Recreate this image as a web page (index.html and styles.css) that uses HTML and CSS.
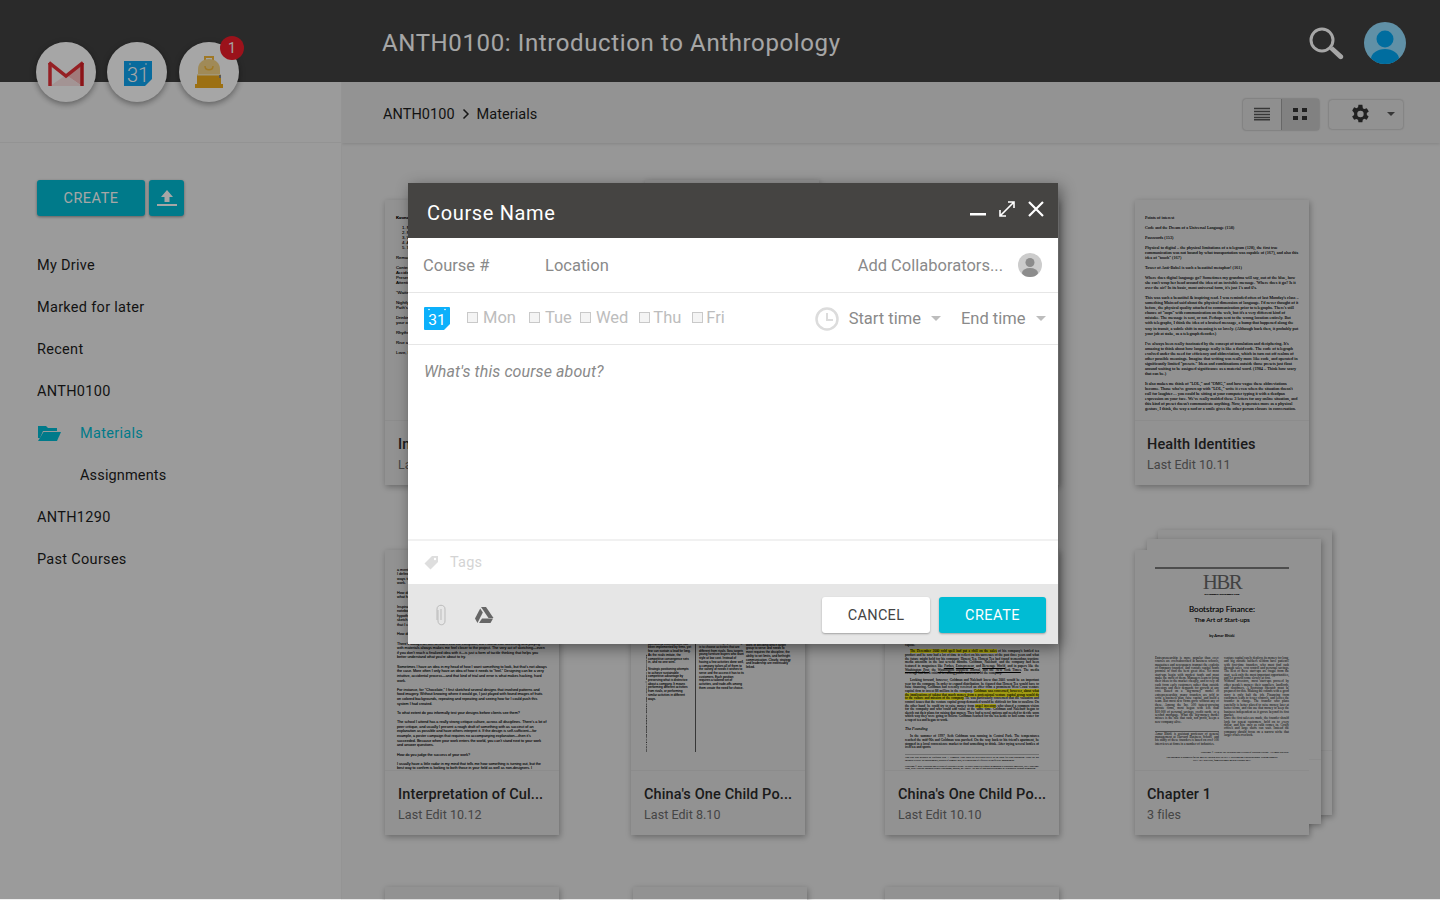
FILE: index.html
```html
<!DOCTYPE html>
<html lang="en">
<head>
<meta charset="utf-8">
<title>ANTH0100: Introduction to Anthropology</title>
<link rel="stylesheet" href="styles.css">
</head>
<body>
<div class="app">
  <header class="topbar">
    <h1 class="course-title">ANTH0100: Introduction to Anthropology</h1>
    <div class="top-actions">
      <svg class="search-icon" width="36" height="40" viewBox="0 0 36 40"><circle cx="14" cy="16" r="11" fill="none" stroke="#fff" stroke-width="3"/><path d="M21.500 25.500l3.500-3 9.500 8.500c1 1 1 2.500 0 3.500s-2.500 1-3.500 0z" fill="#fff"/></svg>
      <svg class="avatar" width="42" height="42" viewBox="0 0 42 42"><defs><clipPath id="av"><circle cx="21" cy="21" r="21"/></clipPath></defs><circle cx="21" cy="21" r="21" fill="#94deff"/><g clip-path="url(#av)" fill="#00a8f4"><circle cx="21" cy="17" r="8.500"/><ellipse cx="21" cy="37" rx="14" ry="10"/></g></svg>
    </div>
  </header>

  <div class="body-row">
    <aside class="sidebar">
      <div class="side-top"></div>
      <div class="side-actions">
        <button class="btn-create-side">CREATE</button>
        <button class="btn-upload"><svg width="20" height="18" viewBox="0 0 20 18"><path d="M10 1l6 7h-3.500v5h-5v-5H4z" fill="#fff"/><rect y="15" width="20" height="2" fill="#fff"/></svg></button>
      </div>
      <nav class="side-nav">
        <a class="nav-item">My Drive</a>
        <a class="nav-item">Marked for later</a>
        <a class="nav-item">Recent</a>
        <a class="nav-item">ANTH0100</a>
        <a class="nav-item nav-active"><svg class="folder" width="24" height="16" viewBox="0 0 24 16"><path d="M1 1h8l2 2h9v3H6L3 13 1 13z" fill="#00bcd4"/><path d="M6.500 7H24l-4 9H1z" fill="#00bcd4"/></svg><span class="nav-label">Materials</span></a>
        <a class="nav-item nav-sub">Assignments</a>
        <a class="nav-item">ANTH1290</a>
        <a class="nav-item">Past Courses</a>
      </nav>
    </aside>

    <main class="main">
      <div class="crumbs">
        <div class="crumb-path">
          <span>ANTH0100</span>
          <svg width="8" height="12" viewBox="0 0 8 12"><path d="M1.500 1.500L6 6l-4.500 4.500" fill="none" stroke="#222" stroke-width="1.500"/></svg>
          <span>Materials</span>
        </div>
        <div class="view-toggle">
          <span class="tog"><svg width="18" height="14" viewBox="0 0 18 14"><path d="M1 1.500h16M1 4.500h16M1 7.500h16M1 10.500h16M1 12.800h16" stroke="#555" stroke-width="1.500"/></svg></span>
          <span class="tog tog-on"><svg width="16" height="12" viewBox="0 0 16 12"><path d="M1 0h5v4H1zM10 0h5v4h-5zM1 8h5v4H1zM10 8h5v4h-5z" fill="#333"/></svg></span>
        </div>
        <div class="settings">
          <svg class="gear" width="22" height="22" viewBox="0 0 24 24"><path fill="#333" d="M19.400 13a7.600 7.600 0 0 0 0-2l2.200-1.700-2.200-3.700-2.600 1a7.500 7.500 0 0 0-1.700-1L14.600 2h-4.300l-.4 2.700a7.500 7.500 0 0 0-1.700 1l-2.600-1-2.100 3.600L5.600 11a7.600 7.600 0 0 0 0 2l-2.200 1.700 2.200 3.700 2.600-1a7.500 7.500 0 0 0 1.700 1l.4 2.600h4.300l.4-2.700a7.500 7.500 0 0 0 1.700-1l2.600 1 2.100-3.600zM12.500 15.500a3.500 3.500 0 1 1 0-7 3.500 3.500 0 0 1 0 7z"/></svg>
          <span class="caret caret-dark"></span>
        </div>
      </div>

      <div class="grid">
        <article class="card">
          <div class="thumb thumb-bold">
            <p><b>Kovno ghetto notes</b></p>
            <p class="num">1. Memory<br>2. Record<br>3. Witness<br>4. Archive<br>5. Silence</p>
            <p>Remarks on the reading</p>
            <p>Context of the diary<br>Accidental preservation<br>Presence of the author<br>Attention to ritual</p>
            <p>"Waiting" as a practice</p>
            <p>Nightly gatherings<br>Path's end in the camps</p>
            <p>Drinking tea together in<br>your own home</p>
            <p>Rhythm of daily life</p>
            <p>Rise and fall</p>
            <p>Love, loss</p>
          </div>
          <div class="meta"><h3>Inscriptions of Ev...</h3><small>Last Edit 10.14</small></div>
        </article>

        <article class="card stack">
          <div class="back back-2 back-top"></div>
          <div class="thumb"></div>
          <div class="meta"><h3>Course Reader</h3><small>2 files</small></div>
        </article>

        <article class="card">
          <div class="thumb"></div>
          <div class="meta"><h3>Fieldwork Notes</h3><small>Last Edit 10.13</small></div>
        </article>

        <article class="card">
          <div class="thumb thumb-serif">
            <p>Points of interest</p>
            <p>Code and the Dream of a Universal Language (158)</p>
            <p>Passwords (153)</p>
            <p>Physical to digital – the physical limitations of a telegram (128), the first true communication was not bound by what transportation was capable of (167), and also this idea of "touch" (167)</p>
            <p>Tower of Anti-Babel is such a beautiful metaphor! (161)</p>
            <p>Where does digital language go? Sometimes my grandma will say, out of the blue, how she can't wrap her head around the idea of an invisible message. 'Where does it go? Is it over the air? In its basic, most universal form, it's just 1's and 0's.</p>
            <p>This was such a beautiful &amp; inspiring read. I was reminded often of last Monday's class – something Mairead said about the physical dimension of language. I'd never thought of it before, the physical quality attached to communication prior to telegraphs. There's still chance of "oops" with communication on the web, but it's a very different kind of mistake. The message is sent, or not. Perhaps sent to the wrong location entirely. But with telegraphs, I think the idea of a bruised message, a bump that happened along the way in transit, a subtle shift in meaning is so lovely. (Although back then, it probably put your job at stake, as a telegraph decoder.)</p>
            <p>I've always been really fascinated by the concept of translation and deciphering. It's amazing to think about how language really is like a fluid code. The code of telegraph evolved under the need for efficiency and abbreviation, which in turn cut off realms of other possible meanings. Imagine that writing was really more like code, and operated in significantly limited "presets." Ideas and combinations outside those presets just float around waiting to be assigned significance as a material word. (1984 – Think how scary that can be.)</p>
            <p>It also makes me think of "LOL," and "OMG," and how vague these abbreviations become. Those who've grown up with "LOL," write it even when the situation doesn't call for laughter… you could be sitting at your computer typing it with a deadpan expression on your face. We've really molded these 3 letters for any online situation, and this kind of preset doesn't communicate anything. Now, it operates more as a physical gesture, I think, the way a nod or a smile gives the other person closure in conversation.</p>
          </div>
          <div class="meta"><h3>Health Identities</h3><small>Last Edit 10.11</small></div>
        </article>

        <article class="card">
          <div class="thumb thumb-sans">
            <p>a mentor once told me that a practice is built<br>I define my process as one of making. There are<br>ways to begin a project, and each leads to new<br>work.</p>
            <p>How do you begin a new project or commission, and<br>what happens in those first few days of the work?</p>
            <p>Inspiration comes from everywhere, and I keep<br>notebooks, pinned images and scraps of paper that<br>hypothesize where the research will go next. The<br>sketch-and-model stage is the part of the process<br>that I can't do without and it often surprises me.</p>
            <p>How do you move from an idea to an image?</p>
            <p>There's always an itch to reach into the computer, but I found that sketching and playing with materials always makes me feel closer to the project. The very act of sketching—even if you don't reach a finalized idea with it—is just a form of tactile thinking that helps you better understand what you're about to try.</p>
            <p>Sometimes I have an idea in my head of how I want something to look, but that's not always the case. More often I only have an idea of how it needs to "feel." Designing can be a very intuitive, accidental process—and that kind of trial and error is what makes hacking, hard work.</p>
            <p>For instance, for "Chocolate," I first sketched several designs that involved patterns and food imagery. Without knowing where it would go, I just played with found images of fruits on colored backgrounds, repeating and repeating and seeing how far I could push this system I had created.</p>
            <p>To what extent do you informally test your designs before clients see them?</p>
            <p>The school I attend has a really strong critique culture, across all disciplines. There's a lot of peer critique, and usually I present a rough draft of something with as succinct of an explanation as possible and have others interpret it. If the design is self-sufficient—for example, a poster campaign that requires no accompanying explanation—then it's succeeded. Because when your work enters the world, you can't stand next to your work and answer questions.</p>
            <p>How do you judge the success of your work?</p>
            <p>I usually have a little radar in my mind that tells me how something is turning out, but the best way to confirm is looking to both those in your field as well as non-designers. I</p>
          </div>
          <div class="meta"><h3>Interpretation of Cul...</h3><small>Last Edit 10.12</small></div>
        </article>

        <article class="card">
          <div class="thumb thumb-cols">
            <span class="side-text">Harvard Business Review November–December 1996 — Copyright © 1996 by Harvard College</span>
            <div class="col col-a">
              <p>Operational effectiveness is necessary but not sufficient, and competition on it alone leads to diminishing returns for the productivity frontier, which describes the maximum value a company can create at a given cost, given the best available technology, skills, and management techniques. Continuous improvement in operational effectiveness has been implemented by firms, yet few can sustain a lead for long. As the rivals imitate, the competitive convergence sets in, and no one wins.</p>
              <p>Strategic positioning attempts to achieve sustainable competitive advantage by preserving what is distinctive about a company. It means performing different activities from rivals, or performing similar activities in different ways.</p>
            </div>
            <div class="col col-b">
              <p>to sustain rivalry from the Internet and to be more alert with information and better cost.</p>
              <p>A. Strategy rests on unique activities. Competitive strategy is about being different. It means deliberately choosing a different set of activities to deliver a unique mix of value. The essence of strategic positioning is to choose activities that are different from rivals. Ikea targets young furniture buyers who want style at low cost. Instead of having a few activities done well, a company tailors all of them to the variety of needs it wishes to serve and the access it has to its customers. Each position requires a tailored set of activities, and trade-offs among them create the need for choice.</p>
            </div>
            <div class="col col-c">
              <p>the whole chain of value, and in the industry the whole marketing approach, the entire value chain, and their disciplines.</p>
              <p>Employees need guidance about how to deepen a strategic position rather than broaden or compromise it. About how to extend the company's uniqueness while strengthening the fit among its activities. This work of deciding which target group to serve and needs to meet requires the discipline, the ability to set limits, and forthright communication. Clearly, strategy and leadership are inextricably linked.</p>
            </div>
          </div>
          <div class="meta"><h3>China's One Child Po...</h3><small>Last Edit 8.10</small></div>
        </article>

        <article class="card">
          <div class="thumb thumb-case">
            <p class="in">Several dividends were offered to invest in the company if Goldman was willing to raise new capital.</p>
            <p class="in"><mark>The December 2000 cold spell had put a chill on the sales</mark> of his company's bottled tea product and he now had a lot of time to reflect on his successes of the past three years and what the future might hold for his company, Honest Tea. Honest Tea had found tremendous traction: media attention in the last several months. Goldman, Nalebuff, and the company had been featured in magazines like <u>Forbes</u>, <u>Entrepreneur</u>, and <u>Beverage World</u>, and in papers like the <u>Washington Post</u>, the <u>Washington Business Journal</u>, and the <u>New York Times</u>. The media coverage had been critical in raising public awareness of the company.</p>
            <p class="in">Looking forward, however, Goldman and Nalebuff knew that 2001 would be an important year for the company. In order to expand distribution, he figured that Honest Tea would have to raise financing. Goldman had recently received an offer from a prominent West Coast venture capital firm to invest $8 million in the company. <mark>Goldman was concerned, however, about what the implications of taking that much money from a professional venture capital group would do to the culture and mission of the company.</mark> He was particularly concerned that the valuation and control issues that the venture capital group demanded would be difficult for him to swallow. On the other hand, he could try to raise money from <mark>angel investors</mark> who shared a common vision for the company and who could add value at the same time. Goldman and Nalebuff began to sketch out their plans for raising that money. They had several options and needed to decide soon which way they were going to follow. Goldman reached for the tea kettle to boil some water for a cup of tea and began to work.</p>
            <p class="founding"><i>The Founding</i></p>
            <p class="in">In the summer of 1997, Seth Goldman was running in Central Park. The temperatures reached the mid-90s and Goldman was parched. On the way back to his friend's apartment, he stopped in a local convenience market to find something to drink. After trying several bottles of iced tea and sports</p>
            <p class="foot">This case was prepared by Professor Paul A. Gompers. HBS cases are developed solely as the basis for class discussion. Cases are not intended to serve as endorsements, sources of primary data, or illustrations of effective or ineffective management.</p>
            <p class="foot2">Copyright © 2001 President and Fellows of Harvard College. To order copies or request permission to reproduce materials, call 1-800-545-7685, write Harvard Business School Publishing, Boston, MA 02163. No part of this publication may be reproduced without permission.</p>
          </div>
          <div class="meta"><h3>China's One Child Po...</h3><small>Last Edit 10.10</small></div>
        </article>

        <article class="card stack">
          <div class="back back-2"></div>
          <div class="back back-1"></div>
          <div class="thumb thumb-hbr">
            <div class="hbr-rule"></div>
            <div class="hbr-logo">HBR</div>
            <div class="hbr-issue">NOVEMBER–DECEMBER 1992</div>
            <div class="hbr-title">Bootstrap Finance:</div>
            <div class="hbr-sub">The Art of Start-ups</div>
            <div class="hbr-by">by Amar Bhidé</div>
            <div class="hbr-cols">
              <div class="hbr-left">
                <p class="hbr-body">Entrepreneurship is more popular than ever: courses are oversubscribed at business schools, magazines and newspapers trumpet the exploits of company founders, and venture capital funds promise to find the next great idea. Yet most start-ups begin with modest funds and must make the most of them. Managers learn to bring their ideas to the market cheaply, and to rely on cash from early customers rather than outside investors and their demands for growth at any cost. Based on a "big-money" model of entrepreneurship, many founders are told to write a business plan, raise capital, and build a team. But most new firms grow without any of these. Among the Inc. 500 fastest-growing private firms, most began with less than $10,000 of personal savings, credit cards, or a second mortgage. What the big-money model misses is the rule that cash, not profit, keeps a new company alive.</p>
                <p class="rule-top">Amar Bhidé is assistant professor of general management at Harvard Business School, and his study of these founders is based on over 100 interviews at firms in a number of industries.</p>
              </div>
              <div>
                <p>venture capital rarely deploys its money for long, and big outside backers seldom have patience with first-time founders, who must find cash through sales, cost control and personal savings. The best of these start-ups are frugal from the start, seek only the most important opportunities, and let growth come slowly at first.</p>
                <p>Without investors, most start-ups proceed by other people's money: their suppliers, landlords, and customers. A bootstrap operator must be prepared for this. Making the rounds with a good story is only half the job. Financing from customers leads to fewer controls, and leaves the founder in charge. The founder who plans carefully is better placed to raise money later at better terms, and can use that money to keep the business independent as it grows beyond its first market.</p>
                <p>Once the first sales are made, the founder should look for repeat customers, hold on to every dollar, and hire only as cash comes in. Costly offices and large staffs can wait. Instead the company should focus on a narrow niche that larger rivals overlook.</p>
              </div>
            </div>
            <div class="hbr-copy">Copyright © 1992 by the President and Fellows of Harvard College. All rights reserved.</div>
            <div class="hbr-note">This document is authorized for use only by Lorenzo Ricci in INFL 1 in Design and Entrepreneurship. Printing taught by<br>HILLARY ROUNDS, from September 2012 to February 2013.</div>
          </div>
          <div class="meta"><h3>Chapter 1</h3><small>3 files</small></div>
        </article>

        <article class="card"></article>
        <article class="card card-shift"></article>
        <article class="card"></article>
      </div>
    </main>
  </div>

  <div class="apps">
    <div class="app-circle">
      <svg class="ic-gmail" width="36" height="26" viewBox="0 0 36 26"><path d="M18 14L34 2v23z" fill="#f7bcbc"/><path d="M2 25l16-11 16 11z" fill="#fbe3e3"/><path d="M2 25V2" stroke="#e53238" stroke-width="3.500"/><path d="M1 1.500L18 15 35 1.500" fill="none" stroke="#e53238" stroke-width="3.500"/><path d="M34 25V2" stroke="#d81f26" stroke-width="3.500"/></svg>
    </div>
    <div class="app-circle">
      <svg class="ic-cal" width="30" height="27" viewBox="0 0 30 27"><path d="M1 1h28v18l-7 7H1z" fill="#0ea5f2"/><circle cx="7" cy="4" r=".8" fill="#fff"/><circle cx="23" cy="4" r=".8" fill="#fff"/><text x="15" y="21.500" text-anchor="middle" class="cal-num">31</text></svg>
    </div>
    <div class="app-circle app-bag">
      <svg class="ic-bag" width="28" height="33" viewBox="0 0 28 33"><path d="M9 5V1h10v4h-2V3h-6v2z" fill="#f5b93a"/><path d="M3 20V14C3 8 8 4 14 4s11 4 11 10v6z" fill="#f6d586"/><path d="M10 11c0 5 8 5 8 0" fill="none" stroke="#f5b93a" stroke-width="1.500"/><rect x="2" y="20" width="24" height="12" fill="#f0ac1e"/><rect x="2" y="19" width="24" height="1.500" fill="#f9e7b6"/><rect x="0" y="29" width="28" height="4" fill="#f0ac1e"/><rect x="24" y="20" width="2" height="3" fill="#888"/></svg>
      <span class="badge">1</span>
    </div>
  </div>

  <div class="scrim"></div>

  <section class="modal">
    <div class="modal-head">
      <h2>Course Name</h2>
      <div class="win-icons">
        <svg width="18" height="18" viewBox="0 0 18 18"><rect x="1" y="13" width="16" height="2.500" fill="#fff"/></svg>
        <svg width="18" height="18" viewBox="0 0 18 18"><path d="M2 16L16 2M10 2h6v6M2 10v6h6" fill="none" stroke="#fff" stroke-width="1.600"/></svg>
        <svg width="18" height="18" viewBox="0 0 18 18"><path d="M2 2l14 14M16 2L2 16" stroke="#fff" stroke-width="2.200"/></svg>
      </div>
    </div>
    <div class="row row-fields">
      <span class="f-num">Course #</span>
      <span class="f-loc">Location</span>
      <span class="f-collab">Add Collaborators...</span>
      <svg width="24" height="24" viewBox="0 0 24 24"><defs><clipPath id="cl"><circle cx="12" cy="12" r="12"/></clipPath></defs><circle cx="12" cy="12" r="12" fill="#ccc"/><g clip-path="url(#cl)" fill="#8c8c8c"><circle cx="12" cy="9.500" r="4.500"/><ellipse cx="12" cy="20" rx="8" ry="5"/></g></svg>
    </div>
    <div class="row row-when">
      <svg class="cal-small" width="26" height="24" viewBox="0 0 26 24"><path d="M0 2a1 1 0 0 1 1-1h24a1 1 0 0 1 1 1v16l-6 6H1a1 1 0 0 1-1-1z" fill="#0cb0fb"/><circle cx="5" cy="3.500" r=".8" fill="#fff"/><circle cx="21" cy="3.500" r=".8" fill="#fff"/><text x="13" y="18.500" text-anchor="middle" class="cal-num-s">31</text></svg>
      <label class="day d-mon"><i class="box"></i>Mon</label>
      <label class="day d-tue"><i class="box"></i>Tue</label>
      <label class="day d-wed"><i class="box"></i>Wed</label>
      <label class="day d-thu"><i class="box"></i>Thu</label>
      <label class="day d-fri"><i class="box"></i>Fri</label>
      <div class="time">
        <svg width="24" height="24" viewBox="0 0 24 24"><circle cx="12" cy="12" r="10.500" fill="none" stroke="#dcdcdc" stroke-width="2.500"/><path d="M12 6v7h6" fill="none" stroke="#dcdcdc" stroke-width="2"/></svg>
        <span class="t-start">Start time</span><span class="caret"></span>
        <span class="t-end">End time</span><span class="caret"></span>
      </div>
    </div>
    <div class="about">What's this course about?</div>
    <div class="tags">
      <svg width="15" height="15" viewBox="0 0 15 15"><path d="M8 1h6v6l-7.500 7.500L.5 8.500z" fill="#dedede"/><circle cx="11" cy="4" r="1.200" fill="#fff"/></svg>
      <span>Tags</span>
    </div>
    <div class="modal-foot">
      <svg class="clip" width="12" height="22" viewBox="0 0 12 22"><path d="M3 6v11c0 5 7 5 7 0V5C10 0 2 0 2 5v11" fill="none" stroke="#bbb" stroke-width="1"/><path d="M6 5v11" stroke="#bbb" stroke-width="1"/></svg>
      <svg class="drive" width="20" height="18" viewBox="0 0 20 18"><path d="M7 1h5l7.500 11h-5z" fill="#666"/><path d="M6.200 2.500l2.600 4L3.500 17 1 12.500z" fill="#666"/><path d="M8 12.500h11L16.500 17H5z" fill="#666"/></svg>
      <button class="btn-cancel">CANCEL</button>
      <button class="btn-create">CREATE</button>
    </div>
  </section>
</div>
</body>
</html>
```

FILE: styles.css
```css
* { box-sizing: border-box; }
html, body { margin: 0; height: 100%; overflow: hidden; }
body { font-family: Roboto, "Noto Sans", sans-serif; background: #e4e4e4; color: #222; }
p, h1, h2, h3 { margin: 0; font-weight: 400; }
button { font-family: inherit; border: 0; padding: 0; cursor: pointer; }

.app { height: 900px; position: relative; overflow: hidden; display: flex; flex-direction: column; }

/* top bar */
.topbar { height: 82px; flex: none; background: #414141; display: flex; align-items: center; padding: 4px 34px 0 382px; }
.course-title { font-size: 24px; letter-spacing: .62px; color: #fff; flex: 1; white-space: nowrap; }
.top-actions { display: flex; align-items: center; gap: 20px; }
.search-icon { display: block; margin-top: 2px; }
.avatar { display: block; }

/* floating app icons */
.apps { position: absolute; left: 36px; top: 42px; display: flex; gap: 11px; }
.app-circle { width: 60px; height: 60px; border-radius: 50%; background: #fff; box-shadow: 0 2px 6px rgba(0,0,0,.4); display: flex; align-items: center; justify-content: center; position: relative; }
.app-bag { margin-left: 1px; }
.ic-gmail { margin-top: 3px; }
.ic-cal { margin: 2px 0 0 2px; }
.ic-bag { margin-top: -2px; }
.badge { position: absolute; left: 41px; top: -6px; width: 24px; height: 24px; border-radius: 50%; background: #ee1c2a; color: #fff; font-size: 14px; display: flex; align-items: center; justify-content: center; }
.cal-num { font-family: Roboto, sans-serif; font-weight: 300; font-size: 20px; fill: #fff; }
.cal-num-s { font-family: Roboto, sans-serif; font-size: 15.500px; fill: #fff; }

.body-row { flex: 1; display: flex; min-height: 0; }

/* sidebar */
.sidebar { width: 342px; flex: none; background: #efefef; border-right: 1px solid #e4e4e4; }
.side-top { height: 61px; border-bottom: 1px solid #e2e2e2; }
.side-actions { display: flex; gap: 4px; padding: 37px 0 0 37px; }
.btn-create-side { width: 108px; height: 36px; border-radius: 3px; background: #00bcd4; color: #fff; font-size: 14.500px; letter-spacing: .5px; box-shadow: 0 1px 3px rgba(0,0,0,.4); }
.btn-upload { width: 35px; height: 36px; border-radius: 3px; background: #00bcd4; box-shadow: 0 1px 3px rgba(0,0,0,.4); display: flex; align-items: center; justify-content: center; }
.side-nav { padding: 28px 0 0 37px; display: flex; flex-direction: column; }
.nav-item { height: 42px; display: flex; align-items: center; font-size: 14.500px; letter-spacing: .3px; color: #1d1d1d; }
.nav-active { color: #00bcd4; }
.folder { margin-right: 19px; flex: none; }
.nav-sub { padding-left: 43px; letter-spacing: .15px; }

/* main */
.main { flex: 1; min-width: 0; background: #e8e8e8; overflow: hidden; }
.crumbs { height: 61px; background: #e2e2e2; box-shadow: 0 1px 3px rgba(0,0,0,.12); display: flex; align-items: center; padding: 3px 37px 0 41px; }
.crumb-path { flex: 1; display: flex; align-items: center; gap: 7px; font-size: 14.500px; letter-spacing: .05px; color: #1d1d1d; }
.view-toggle { display: flex; height: 31px; margin-right: 10px; border-radius: 3px; box-shadow: 0 0 2px rgba(0,0,0,.4); background: #dcdcdc; }
.tog { width: 38px; display: flex; align-items: center; justify-content: center; }
.tog-on { background: #c6c6c6; box-shadow: inset 1px 0 0 rgba(0,0,0,.2); }
.settings { width: 74px; height: 29px; border-radius: 3px; background: #e0e0e0; box-shadow: 0 0 2px rgba(0,0,0,.35); display: flex; align-items: center; padding-left: 20px; }
.gear { margin-right: 16px; flex: none; }
.caret { display: inline-block; width: 0; height: 0; border: 5.500px solid transparent; border-top: 5px solid #bdbdbd; border-bottom: 0; }
.caret-dark { border-top-color: #555; border-width: 4.500px 4.500px 0; }

/* file grid */
.grid { display: grid; grid-template-columns: 246px 254px 250px 174px; grid-template-rows: 350px 337px 285px; padding: 57px 0 0 43px; }
.card { width: 174px; height: 285px; background: #e0e0e0; box-shadow: 1px 2px 6px rgba(0,0,0,.3); position: relative; display: flex; flex-direction: column; }
.card-shift { margin-left: 2px; }
.back { position: absolute; width: 174px; height: 285px; background: #e0e0e0; box-shadow: 1px 2px 6px rgba(0,0,0,.3); }
.back::after { content: ""; display: block; height: 1px; margin-top: 220px; background: #d8d8d8; }
.back-1 { left: 12px; top: -11px; }
.back-2 { left: 23px; top: -20px; }
.back-top { left: 14px; }
.stack .thumb, .stack .meta { position: relative; background: #e0e0e0; }
.thumb { height: 220px; overflow: hidden; flex: none; color: #000; text-shadow: 0 0 .5px rgba(0,0,0,.5); }
.meta { flex: 1; border-top: 1px solid #d8d8d8; padding: 15px 0 0 13px; }
.grid > .card:nth-child(4n) .meta { padding-left: 12px; }
.meta h3 { font-size: 14.500px; line-height: 18px; letter-spacing: .13px; font-weight: 500; color: #2a2a2a; white-space: nowrap; }
.meta small { display: block; font-size: 12.500px; line-height: 15px; margin-top: 3px; letter-spacing: .05px; color: #6a6a6a; }

/* thumbnails: tiny document text */
.thumb-serif { font-family: "Liberation Serif", serif; font-size: 4.300px; line-height: 5.030px; padding: 15px 10px 0; }
.thumb-serif p { margin-bottom: 5px; }
.thumb-bold { font-family: "Liberation Sans", sans-serif; font-size: 4.300px; line-height: 5px; font-weight: 700; padding: 15px 0 0 11px; }
.thumb-bold p { margin-bottom: 5px; }
.thumb-bold .num { padding-left: 6px; }
.thumb-sans { font-family: "Liberation Sans", sans-serif; font-size: 3.700px; line-height: 4.630px; padding: 17.500px 12px 0; }
.thumb-sans p { margin-bottom: 4.630px; }
.thumb-cols { font-family: "Liberation Sans", sans-serif; font-size: 3.100px; line-height: 3.700px; display: flex; position: relative; }
.side-text { position: absolute; left: 14px; top: 122px; height: 80px; writing-mode: vertical-rl; transform: rotate(180deg); font-size: 2.300px; line-height: 3px; white-space: nowrap; }
.col { width: 46px; flex: none; }
.col p { margin-bottom: 3px; }
.col-a { margin: 52px 0 0 17px; width: 44px; }
.col-b { margin: 56px 0 0 3px; padding-left: 3px; border-left: 1px solid #555; height: 146px; width: 50px; }
.col-c { margin: 50px 0 0 1px; }
.thumb-case { font-family: "Liberation Serif", serif; font-size: 3.450px; line-height: 3.650px; padding: 90px 20px 0; text-align: justify; }
.thumb-case p { margin-bottom: 3px; }
.thumb-case .in { text-indent: 5px; }
.thumb-case mark { background: #f8ef1d; color: inherit; }
.thumb-case .founding { font-size: 4px; margin: 4px 0 5px; }
.thumb-case .foot { font-size: 2.400px; line-height: 2.800px; border-top: 1px solid #aaa; padding-top: 2px; margin-top: 4px; }
.thumb-case .foot2 { font-size: 2.400px; line-height: 2.800px; }
.thumb-hbr { padding: 17px 20px 0; font-family: "Liberation Serif", serif; text-align: center; }
.hbr-rule { height: 2px; background: #777; }
.hbr-logo { font-size: 21px; line-height: 21px; letter-spacing: -1.500px; margin-top: 3px; color: #666; text-shadow: none; }
.hbr-issue { font-family: "Liberation Sans", sans-serif; font-weight: 700; font-size: 2.400px; line-height: 3px; }
.hbr-title { font-family: Lato, sans-serif; font-size: 8px; line-height: 11px; margin-top: 8px; color: #111; }
.hbr-sub { font-family: Lato, sans-serif; font-size: 6.400px; line-height: 8px; margin-top: 1px; color: #111; }
.hbr-by { font-family: Lato, sans-serif; font-size: 4px; line-height: 5px; margin-top: 9px; }
.hbr-cols { display: grid; grid-template-columns: 64px 65px; gap: 5px; margin-top: 19px; font-size: 3.300px; line-height: 3.350px; text-align: justify; height: 89px; text-shadow: none; }
.hbr-left { display: flex; flex-direction: column; height: 89px; }
.hbr-body { flex: 1; min-height: 0; }
.hbr-cols .rule-top { flex: none; border-top: 1px solid #777; margin-top: 2px; padding-top: 1px; }
.hbr-copy { font-size: 2.500px; line-height: 3px; text-align: right; margin-top: 5px; white-space: nowrap; }
.hbr-note { font-size: 2.300px; line-height: 2.800px; margin-top: 2px; white-space: nowrap; }

/* dimming layer */
.scrim { position: absolute; left: 0; top: 0; right: 0; height: 899px; background: rgba(0,0,0,.35); }

/* modal */
.modal { position: absolute; left: 408px; top: 183px; width: 650px; height: 461px; background: #fff; box-shadow: 3px 4px 14px rgba(0,0,0,.45); display: flex; flex-direction: column; }
.modal-head { height: 55px; background: #454442; display: flex; align-items: center; justify-content: space-between; padding: 4px 13px 0 19px; flex: none; }
.modal-head h2 { font-size: 20px; letter-spacing: .65px; color: #fff; }
.win-icons { display: flex; gap: 11px; margin-top: -8px; }
.win-icons svg { display: block; }
.row { display: flex; align-items: center; border-bottom: 1px solid #e6e6e6; flex: none; font-size: 16.500px; color: #8a8a8a; }
.row-fields { height: 55px; padding: 0 16px 0 15px; }
.f-num { width: 122px; }
.f-loc { flex: 1; }
.f-collab { margin-right: 15px; }
.row-when { height: 52px; padding: 0 12.500px 0 16px; color: #bdbdbd; }
.cal-small { margin: -2px 17px 0 0; flex: none; }
.day { display: flex; align-items: center; margin-top: -2px; }
.box { width: 11px; height: 11px; border: 1px solid #c9c9c9; background: #f4f4f4; margin-right: 5px; flex: none; }
.d-mon { margin-right: 13px; }
.d-tue { margin-right: 8px; }
.d-wed { margin-right: 11px; }
.d-thu { margin-right: 11px; }
.d-thu .box, .d-fri .box { margin-right: 3px; }
.time { margin-left: auto; display: flex; align-items: center; color: #8a8a8a; }
.t-start { margin: 0 10px 0 10px; }
.t-end { margin: 0 10px 0 20px; }
.about { flex: 1; padding: 17px 0 0 16px; font-size: 16px; font-style: italic; color: #8a8a8a; letter-spacing: .1px; }
.tags { height: 45px; flex: none; border-top: 2px solid #f1f1f1; display: flex; align-items: center; gap: 11px; padding-left: 16px; font-size: 14.500px; letter-spacing: .2px; color: #d4d4d4; }
.modal-foot { height: 60px; flex: none; background: #e6e6e6; display: flex; align-items: center; padding: 1px 12px 0 27px; }
.clip { margin-right: 27px; }
.drive { margin-right: auto; }
.btn-cancel, .btn-create { height: 36px; border-radius: 3px; font-size: 14.500px; letter-spacing: .5px; padding-top: 1px; box-shadow: 0 1px 2px rgba(0,0,0,.3); }
.btn-cancel { width: 108px; background: #fff; color: #444; margin-right: 9px; letter-spacing: .3px; }
.btn-create { width: 107px; background: #00bcd4; color: #fff; }
```
